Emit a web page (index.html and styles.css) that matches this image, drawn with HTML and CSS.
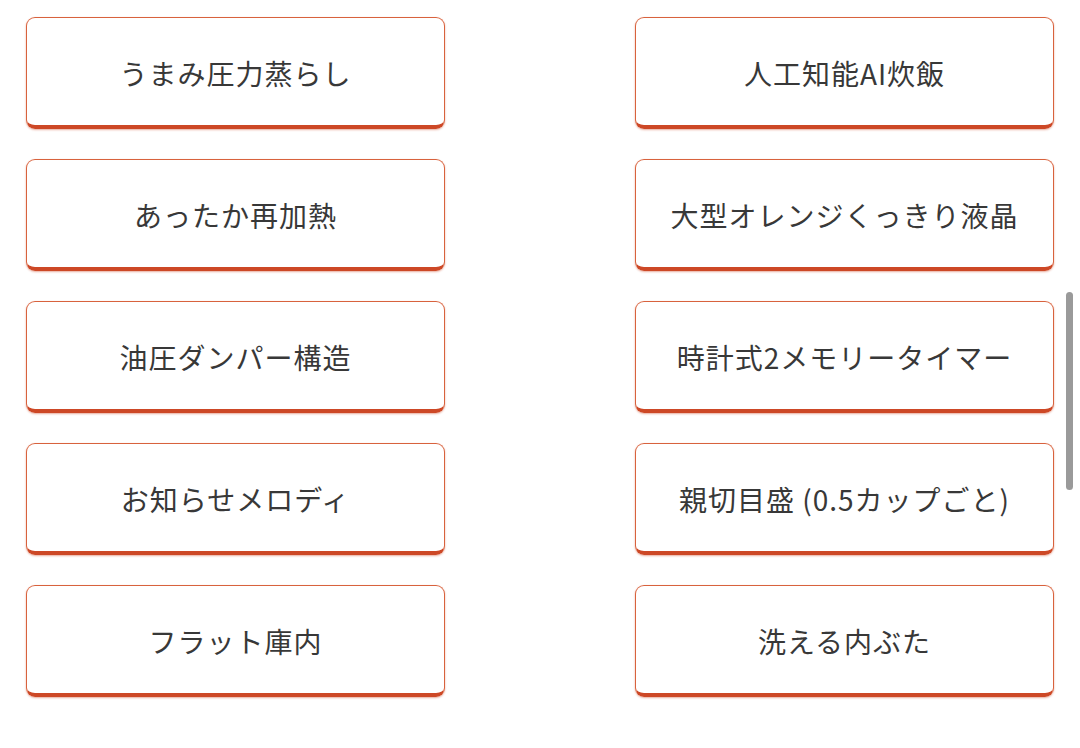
FILE: index.html
```html
<!DOCTYPE html>
<html lang="ja">
<head>
<meta charset="utf-8">
<link rel="stylesheet" href="styles.css">
</head>
<body>
<div class="grid">
  <div class="card">うまみ圧力蒸らし</div>
  <div class="card">人工知能AI炊飯</div>
  <div class="card">あったか再加熱</div>
  <div class="card">大型オレンジくっきり液晶</div>
  <div class="card">油圧ダンパー構造</div>
  <div class="card">時計式2メモリータイマー</div>
  <div class="card">お知らせメロディ</div>
  <div class="card">親切目盛 (0.5カップごと)</div>
  <div class="card">フラット庫内</div>
  <div class="card">洗える内ぶた</div>
</div>
<div class="scrollbar"></div>
</body>
</html>
```

FILE: styles.css
```css
html, body {
  margin: 0;
  padding: 0;
  background: #ffffff;
}
body {
  width: 1080px;
  height: 748px;
  overflow: hidden;
  position: relative;
  font-family: "Noto Sans CJK JP", "Noto Sans", sans-serif;
}
.grid {
  display: grid;
  grid-template-columns: 419px 419px;
  column-gap: 190px;
  row-gap: 30px;
  padding: 17px 0 0 26px;
}
.card {
  box-sizing: border-box;
  height: 112px;
  border: 1.5px solid #d8623d;
  border-bottom: 4px solid #cd4826;
  border-radius: 9px;
  box-shadow: 0 1px 2px rgba(205, 72, 38, 0.45);
  display: flex;
  align-items: center;
  justify-content: center;
  font-size: 28px;
  color: #383838;
  letter-spacing: 1px;
  padding-top: 2px;
}
.scrollbar {
  position: absolute;
  left: 1066px;
  top: 292px;
  width: 7px;
  height: 198px;
  border-radius: 4px;
  background: #9a9a9a;
}
```
